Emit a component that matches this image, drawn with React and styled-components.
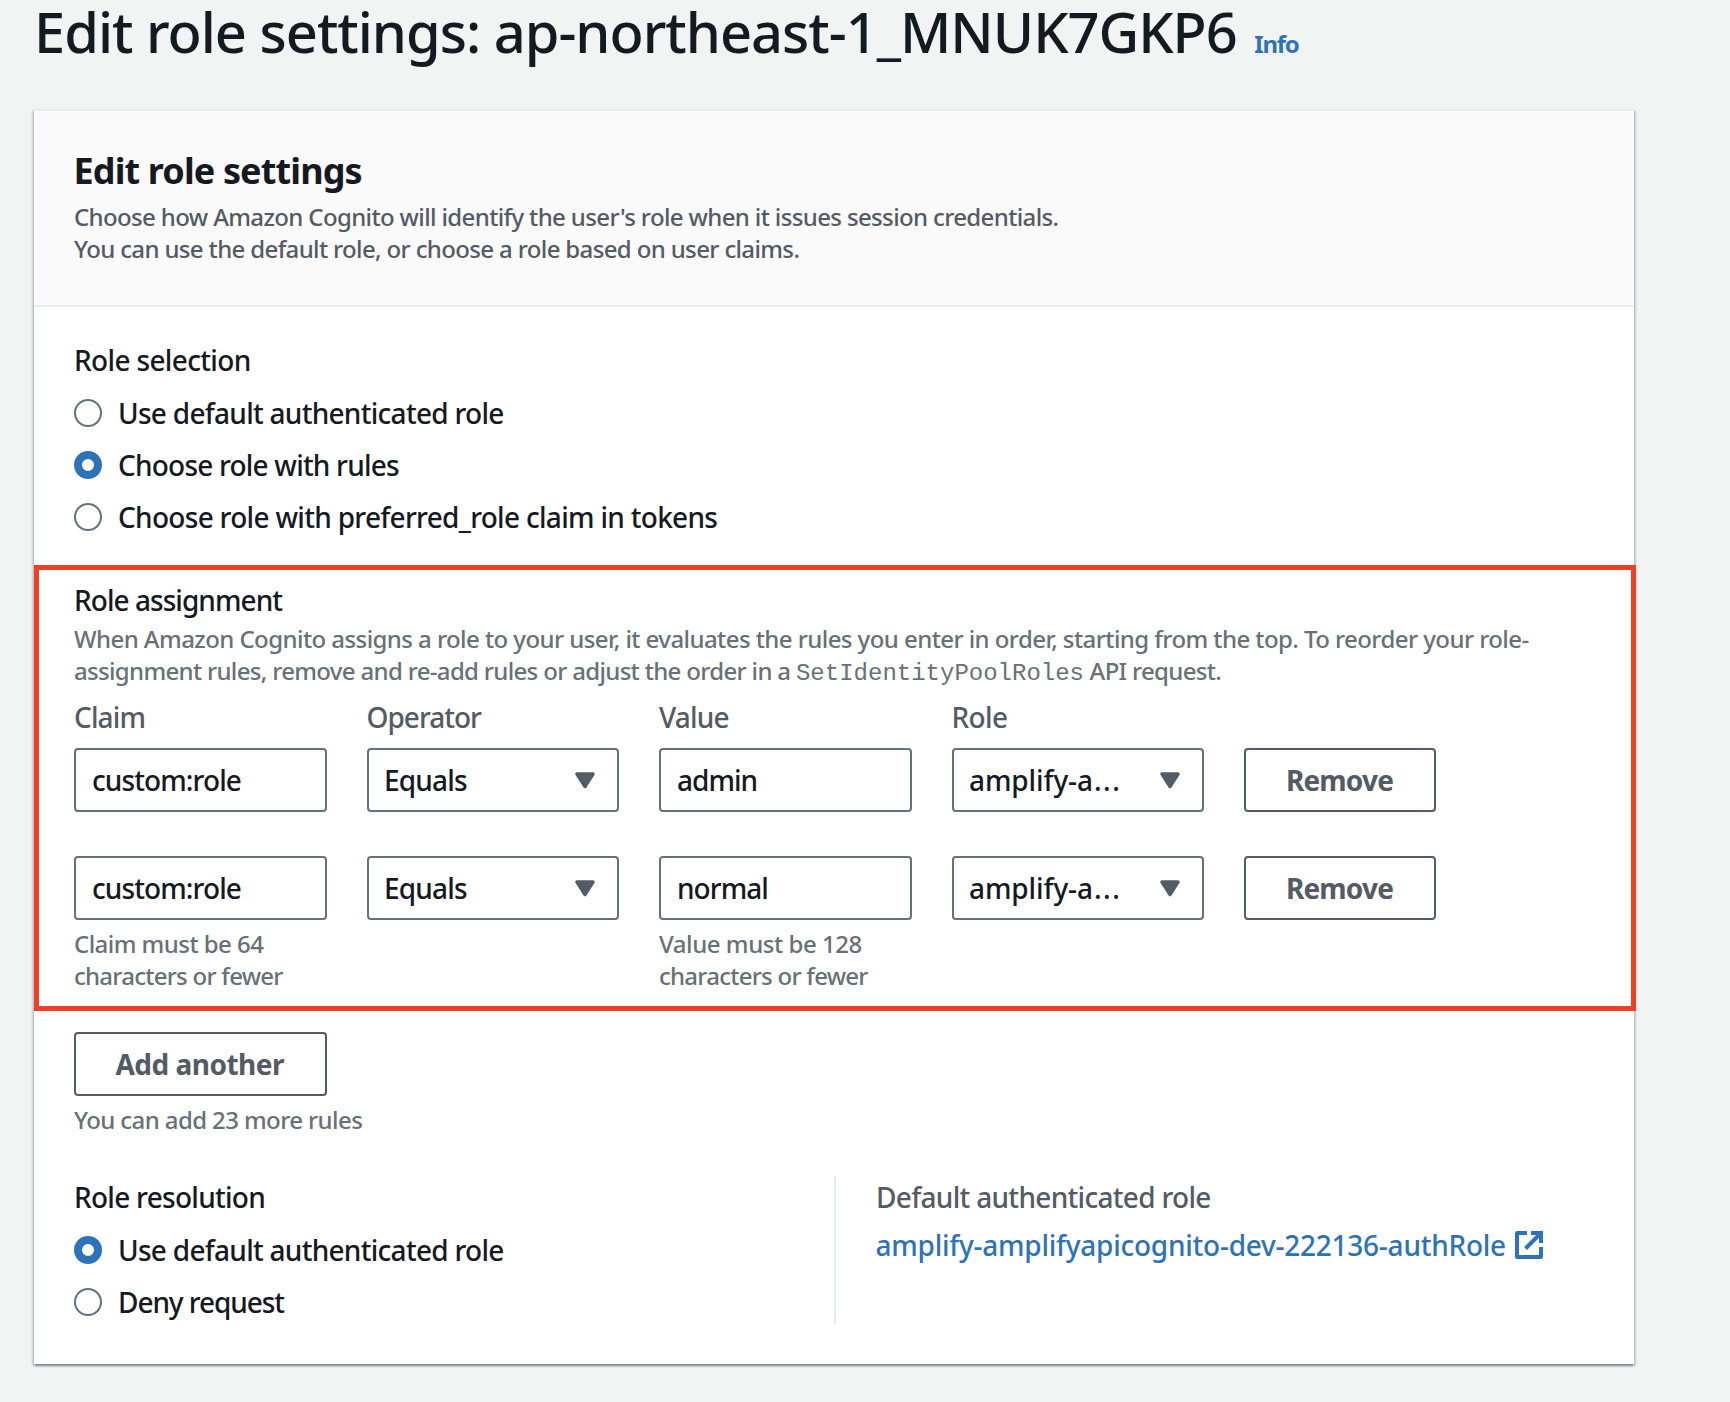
import React, { useState } from "react";
import styled, { createGlobalStyle, css } from "styled-components";

const color = {
  page: "#f2f3f3",
  panel: "#ffffff",
  header: "#fafafa",
  divider: "#eaeded",
  text: "#16191f",
  label: "#545b64",
  hint: "#687078",
  link: "#2e73b8",
  highlight: "#ee4027",
};

const GlobalStyle = createGlobalStyle`
  *, *::before, *::after { box-sizing: border-box; }
  body {
    margin: 0;
    background: ${color.page};
    color: ${color.text};
    font-family: "Noto Sans", "Open Sans", sans-serif;
    font-weight: 500;
    font-kerning: normal;
  }
`;

const tracking = css`
  letter-spacing: ${(p) => p.$track ?? -0.7}px;
`;

const Page = styled.main`
  min-height: 1402px;
  padding-left: 34px;
`;

const TitleRow = styled.div`
  display: flex;
  align-items: baseline;
  height: 62px;
  margin-bottom: 47px;
`;

const Title = styled.h1`
  margin: 0;
  font-size: 56px;
  font-weight: 500;
  line-height: 62px;
  letter-spacing: -1.01px;
  white-space: nowrap;
`;

const InfoLink = styled.a`
  margin-left: 17.5px;
  color: ${color.link};
  font-size: 24px;
  font-weight: 700;
  letter-spacing: -1.24px;
`;

const Panel = styled.section`
  width: 1600px;
  background: ${color.panel};
  border-top: 2px solid ${color.divider};
  box-shadow:
    0 2px 2px 0 rgba(0, 28, 36, 0.3),
    2px 2px 2px 0 rgba(0, 28, 36, 0.15),
    -2px 2px 2px 0 rgba(0, 28, 36, 0.15);
`;

const PanelHeader = styled.header`
  padding: 38px 40px 40px;
  background: ${color.header};
  border-bottom: 2px solid ${color.divider};
`;

const PanelTitle = styled.h2`
  margin: 0 0 8px -0.5px;
  font-size: 36px;
  font-weight: 700;
  line-height: 44px;
  letter-spacing: -0.87px;
`;

const Note = styled.div`
  color: ${(p) => (p.$strong ? color.label : color.hint)};
  font-size: 24px;
  line-height: 32px;
  white-space: nowrap;
  ${tracking}
`;

const Code = styled.code`
  font-family: "Liberation Mono", monospace;
  font-size: 24px;
  font-weight: 400;
  letter-spacing: 0;
  line-height: 1;
`;

const Group = styled.div`
  padding: 31px 40px 0;
`;

const Label = styled.div`
  height: ${(p) => p.$height || 44}px;
  color: ${(p) => (p.$muted ? color.label : color.text)};
  font-size: 28px;
  line-height: ${(p) => p.$height || 44}px;
  white-space: nowrap;
  ${tracking}
`;

const RadioList = styled.div`
  display: flex;
  flex-direction: column;
  margin-top: ${(p) => p.$top}px;
`;

const RadioOption = styled.label`
  display: flex;
  align-items: center;
  gap: 16px;
  height: 52px;
  cursor: pointer;
`;

const RadioInput = styled.input`
  appearance: none;
  flex: none;
  width: 28px;
  height: 28px;
  margin: 0;
  border: 2px solid ${color.hint};
  border-radius: 50%;
  background: #fff;
  &:checked {
    border: 8px solid ${color.link};
  }
`;

const RadioText = styled.span`
  padding-bottom: 1px;
  font-size: 28px;
  line-height: 44px;
  white-space: nowrap;
  ${tracking}
`;

const Highlighted = styled.section`
  width: 1602px;
  margin-top: 22px;
  padding: 8px 0 14px 35px;
  border: 5px solid ${color.highlight};
`;

const AssignmentNotes = styled.div`
  padding-top: 1px;
`;

const RuleGrid = styled.div`
  display: grid;
  grid-template-columns: repeat(5, 252.5px);
  column-gap: 40px;
  align-items: start;
  margin-top: ${(p) => p.$top || 0}px;
`;

const box = css`
  width: 100%;
  height: 64px;
  border: 2px solid ${color.hint};
  border-radius: 4px;
  background: #fff;
  color: ${color.text};
  font-family: inherit;
  font-size: 28px;
  font-weight: 500;
`;

const TextInput = styled.input`
  ${box}
  padding: 0 16px;
  line-height: 44px;
  outline: none;
  ${tracking}
`;

const SelectButton = styled.button`
  ${box}
  display: flex;
  align-items: center;
  justify-content: space-between;
  padding: 0 22px 0 15.5px;
  line-height: 44px;
  text-align: left;
  ${tracking}
`;

const SelectValue = styled.span`
  margin-top: -1px;
`;

const Dots = styled.span`
  margin-left: 1px;
  letter-spacing: 1.6px;
`;

const ActionButton = styled.button`
  width: ${(p) => p.$width}px;
  height: 64px;
  padding: 0 1px 1px 0;
  border: 2px solid ${color.label};
  border-radius: 4px;
  background: #fff;
  color: ${color.label};
  font-family: inherit;
  font-size: 28px;
  font-weight: 700;
  line-height: 44px;
  ${tracking}
`;

const AddArea = styled.div`
  display: flex;
  flex-direction: column;
  gap: 8px;
  padding: 21px 40px 0;
`;

const Resolution = styled.div`
  display: grid;
  grid-template-columns: 760px 1fr;
  grid-template-rows: 148px;
  padding: 40px 40px;
`;

const DefaultRole = styled.div`
  padding-left: 40px;
  border-left: 2px solid ${color.divider};
`;

const RoleLink = styled.a`
  display: flex;
  align-items: center;
  height: 44px;
  margin: 5px 0 0 -0.5px;
  color: ${color.link};
  font-size: 28px;
  line-height: 44px;
  letter-spacing: -0.25px;
  white-space: nowrap;
`;

const LinkIcon = styled.svg`
  flex: none;
  width: 28px;
  height: 28px;
  margin-left: 9px;
`;

const Caret = () => (
  <svg width="20" height="17" viewBox="0 0 20 17" aria-hidden="true">
    <path d="M2 2H18L10 14.5Z" fill={color.label} stroke={color.label} strokeWidth="3.4" strokeLinejoin="round" />
  </svg>
);

const ExternalIcon = () => (
  <LinkIcon viewBox="0 0 28 28" fill="none" stroke={color.link} strokeWidth="4" aria-hidden="true">
    <path d="M12 2H2V26H26V16" strokeLinejoin="round" />
    <path d="M16 2H26V12" />
    <path d="M25 3L10.5 17.5" />
  </LinkIcon>
);

const Radio = ({ name, value, current, onPick, track }) => (
  <RadioOption>
    <RadioInput type="radio" name={name} checked={current === value} onChange={() => onPick(value)} />
    <RadioText $track={track}>{value}</RadioText>
  </RadioOption>
);

const selectionOptions = [
  { value: "Use default authenticated role", track: -0.72 },
  { value: "Choose role with rules", track: -0.79 },
  { value: "Choose role with preferred_role claim in tokens", track: -0.7 },
];

const resolutionOptions = [
  { value: "Use default authenticated role", track: -0.72 },
  { value: "Deny request", track: -1.08 },
];

const rules = [
  { claim: "custom:role", operator: "Equals", value: "admin", track: -1 },
  { claim: "custom:role", operator: "Equals", value: "normal", track: -0.95 },
];

const RuleFields = ({ rule }) => (
  <>
    <TextInput defaultValue={rule.claim} aria-label="Claim" $track={-0.9} />
    <SelectButton type="button" $track={-0.82}>
      <SelectValue>{rule.operator}</SelectValue>
      <Caret />
    </SelectButton>
    <TextInput defaultValue={rule.value} aria-label="Value" $track={rule.track} />
    <SelectButton type="button" $track={-0.1}>
      <SelectValue>
        amplify-a<Dots>...</Dots>
      </SelectValue>
      <Caret />
    </SelectButton>
    <ActionButton type="button" $width={192} $track={-0.8}>
      Remove
    </ActionButton>
  </>
);

export default function App() {
  const [selection, setSelection] = useState("Choose role with rules");
  const [resolution, setResolution] = useState("Use default authenticated role");

  return (
    <Page>
      <GlobalStyle />
      <TitleRow>
        <Title>Edit role settings: ap-northeast-1_MNUK7GKP6</Title>
        <InfoLink>Info</InfoLink>
      </TitleRow>

      <Panel>
        <PanelHeader>
          <PanelTitle>Edit role settings</PanelTitle>
          <Note $strong $track={-0.635}>
            Choose how Amazon Cognito will identify the user's role when it issues session credentials.
          </Note>
          <Note $strong $track={-0.642}>
            You can use the default role, or choose a role based on user claims.
          </Note>
        </PanelHeader>

        <Group>
          <Label $track={-0.65}>Role selection</Label>
          <RadioList $top={5}>
            {selectionOptions.map((o) => (
              <Radio key={o.value} name="selection" current={selection} onPick={setSelection} {...o} />
            ))}
          </RadioList>
        </Group>

        <Highlighted>
          <Label $track={-0.95}>Role assignment</Label>
          <AssignmentNotes>
            <Note $track={-0.57}>
              When Amazon Cognito assigns a role to your user, it evaluates the rules you enter in order, starting from
              the top. To reorder your role-
            </Note>
            <Note $track={-0.675}>
              assignment rules, remove and re-add rules or adjust the order in a <Code>SetIdentityPoolRoles</Code> API
              request.
            </Note>
          </AssignmentNotes>

          <RuleGrid $top={8}>
            <Label $muted $track={-0.88}>Claim</Label>
            <Label $muted $track={-1}>Operator</Label>
            <Label $muted $track={-0.85}>Value</Label>
            <Label $muted $track={-0.6}>Role</Label>
          </RuleGrid>
          <RuleGrid $top={9}>
            <RuleFields rule={rules[0]} />
          </RuleGrid>
          <RuleGrid $top={44}>
            <RuleFields rule={rules[1]} />
          </RuleGrid>
          <RuleGrid $top={8}>
            <div>
              <Note $track={-0.55}>Claim must be 64</Note>
              <Note $track={-0.75}>characters or fewer</Note>
            </div>
            <div />
            <div>
              <Note $track={-0.45}>Value must be 128</Note>
              <Note $track={-0.75}>characters or fewer</Note>
            </div>
          </RuleGrid>
        </Highlighted>

        <AddArea>
          <ActionButton type="button" $width={252.5} $track={-0.5}>
            Add another
          </ActionButton>
          <Note $track={-0.6}>You can add 23 more rules</Note>
        </AddArea>

        <Resolution>
          <div>
            <Label $height={42} $track={-0.72}>Role resolution</Label>
            <RadioList $top={6}>
              {resolutionOptions.map((o) => (
                <Radio key={o.value} name="resolution" current={resolution} onPick={setResolution} {...o} />
              ))}
            </RadioList>
          </div>
          <DefaultRole>
            <Label $muted $height={42} $track={-0.69}>Default authenticated role</Label>
            <RoleLink>
              amplify-amplifyapicognito-dev-222136-authRole
              <ExternalIcon />
            </RoleLink>
          </DefaultRole>
        </Resolution>
      </Panel>
    </Page>
  );
}
